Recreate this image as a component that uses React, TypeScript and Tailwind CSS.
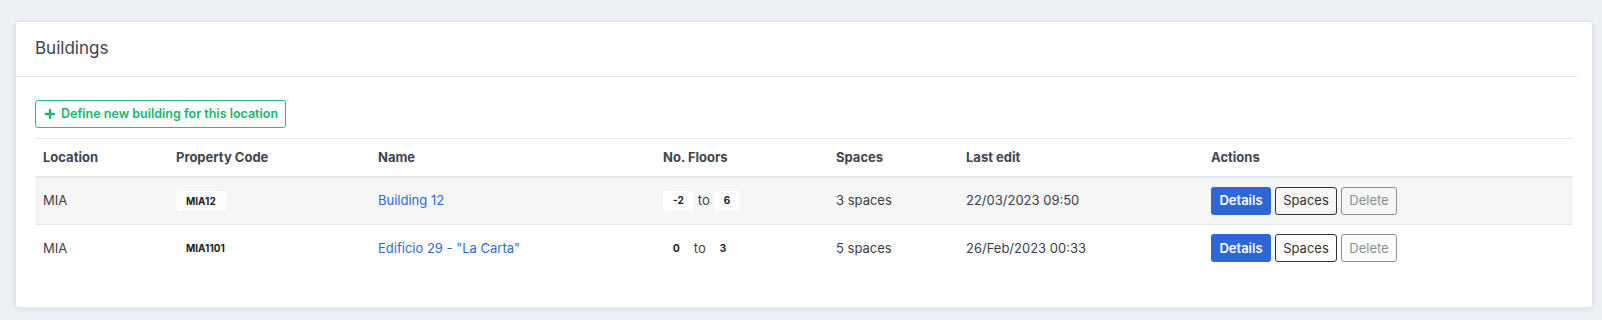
import React from "react";
import { Plus } from "lucide-react";

type Row = {
  location: string;
  code: string;
  name: string;
  from: string;
  to: string;
  spaces: string;
  edit: string;
};

const rows: Row[] = [
  { location: "MIA", code: "MIA12", name: "Building 12", from: "-2", to: "6", spaces: "3 spaces", edit: "22/03/2023 09:50" },
  { location: "MIA", code: "MIA1101", name: 'Edificio 29 - "La Carta"', from: "0", to: "3", spaces: "5 spaces", edit: "26/Feb/2023 00:33" },
];

function Badge({ children }: { children: React.ReactNode }) {
  return (
    <span className="inline-flex h-[20px] items-center rounded-[4px] bg-white px-[10px] text-[10px] font-bold text-[#222]">
      {children}
    </span>
  );
}

export default function App() {
  return (
    <div
      className="min-h-screen bg-[#edf0f4] pt-[21px] pl-[15px] pr-[9px] pb-[12px]"
      style={{ fontFamily: "Inter, 'Noto Sans', sans-serif" }}
    >
      <div className="rounded-[4px] border border-[#e1e6ee] bg-white shadow-[0_1px_5px_rgba(40,50,70,0.10)]">
        <div className="mr-[15px] flex h-[55px] items-center border-b border-[#dde3ef] px-[19px]">
          <h1 className="text-[17px] font-normal text-[#3c4250]">Buildings</h1>
        </div>
        <div className="px-[19px] pt-[23px] pb-[35px]">
          <button className="flex h-[28px] items-center gap-[4px] rounded-[3px] border border-[#22c07a] px-[7px] text-[12.5px] font-semibold text-[#18b56e]">
            <Plus size={14} strokeWidth={4} />
            Define new building for this location
          </button>
          <table className="mt-[10px] w-full table-fixed border-collapse text-[13px] text-[#3b3f45]">
            <colgroup>
              <col className="w-[133px]" />
              <col className="w-[202px]" />
              <col className="w-[285px]" />
              <col className="w-[173px]" />
              <col className="w-[130px]" />
              <col className="w-[245px]" />
              <col />
            </colgroup>
            <thead>
              <tr className="h-[38px] border-t border-b-2 border-t-[#e6e9ee] border-b-[#e4e8ee] text-left font-bold text-[#3f4651]">
                <th className="px-[8px] font-bold">Location</th>
                <th className="px-[8px] font-bold">Property Code</th>
                <th className="px-[8px] font-bold">Name</th>
                <th className="px-[8px] font-bold">No. Floors</th>
                <th className="px-[8px] font-bold">Spaces</th>
                <th className="px-[8px] font-bold">Last edit</th>
                <th className="px-[8px] font-bold">Actions</th>
              </tr>
            </thead>
            <tbody>
              {rows.map((r, i) => (
                <tr
                  key={r.code}
                  className={
                    i === 0
                      ? "h-[48px] border-b border-[#e6e6e6] bg-[#f6f6f6]"
                      : "h-[47px] bg-white"
                  }
                >
                  <td className="px-[8px]">{r.location}</td>
                  <td className="px-[8px]">
                    <Badge>{r.code}</Badge>
                  </td>
                  <td className="px-[8px]">
                    <a className="text-[#2f68d8]">{r.name}</a>
                  </td>
                  <td className="px-[8px]">
                    <div className="flex items-center gap-[4px]">
                      <Badge>{r.from}</Badge>
                      <span>to</span>
                      <Badge>{r.to}</Badge>
                    </div>
                  </td>
                  <td className="px-[8px]">{r.spaces}</td>
                  <td className="px-[8px]">{r.edit}</td>
                  <td className="px-[8px]">
                    <div className="flex items-center gap-[4px]">
                      <button className="h-[28px] w-[60px] rounded-[3px] bg-[#2d66d6] text-[13px] font-semibold text-white">
                        Details
                      </button>
                      <button className="h-[28px] w-[62px] rounded-[3px] border border-[#333] text-[13px] font-normal text-[#333]">
                        Spaces
                      </button>
                      <button className="h-[28px] w-[56px] rounded-[3px] border border-[#8d8d8d] text-[13px] font-normal text-[#8d8d8d]">
                        Delete
                      </button>
                    </div>
                  </td>
                </tr>
              ))}
            </tbody>
          </table>
        </div>
      </div>
    </div>
  );
}
